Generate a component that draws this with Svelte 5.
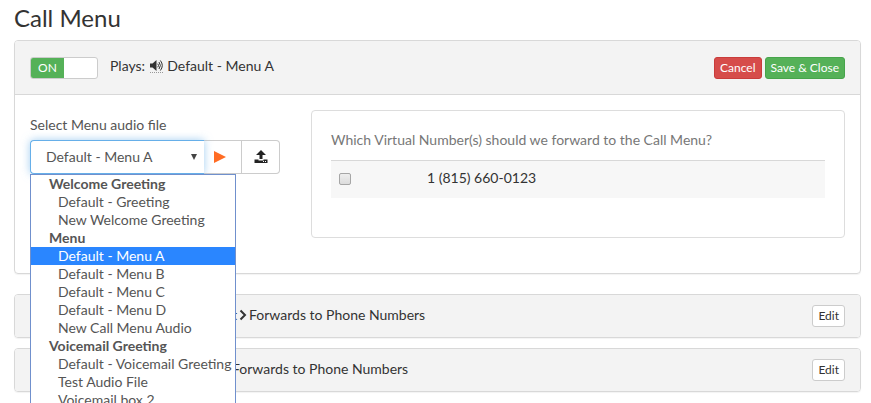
<script lang="ts">
	type Group = { label: string; options: string[] };

	const groups: Group[] = [
		{ label: 'Welcome Greeting', options: ['Default - Greeting', 'New Welcome Greeting'] },
		{
			label: 'Menu',
			options: [
				'Default - Menu A',
				'Default - Menu B',
				'Default - Menu C',
				'Default - Menu D',
				'New Call Menu Audio'
			]
		},
		{
			label: 'Voicemail Greeting',
			options: ['Default - Voicemail Greeting', 'Test Audio File', 'Voicemail box 2']
		}
	];

	let selected = $state('Default - Menu A');
	let open = $state(true);
	let enabled = $state(true);
	let forwarded = $state(false);

	function pick(option: string) {
		selected = option;
		open = false;
	}

	function toggleList(e: Event) {
		// the grouped list below replaces the native popup
		e.preventDefault();
		open = !open;
	}
</script>

<main>
	<h1>Call Menu</h1>

	<section class="panel">
		<header class="panel-heading main-heading">
			<button class="switch" class:off={!enabled} onclick={() => (enabled = !enabled)}>
				<span>{enabled ? 'ON' : 'OFF'}</span>
			</button>
			<div class="plays">
				Plays:
				<span class="speaker">
					<svg width="13" height="11" viewBox="0 0 13 11" aria-hidden="true">
						<path d="M0 3.5h2.5L6.5 0v11L2.5 7.5H0z" fill="#333" />
						<path
							d="M7.8 3.7q1.4 1.8 0 3.6M9 2q2.8 3.5 0 7M10.4.5q3.8 5 0 10"
							fill="none"
							stroke="#333"
						/>
					</svg>
				</span>
				{selected}
			</div>
			<div class="actions">
				<button class="btn danger">Cancel</button>
				<button class="btn success">Save &amp; Close</button>
			</div>
		</header>

		<div class="panel-body">
			<div class="audio">
				<label for="audio-file">Select Menu audio file</label>
				<div class="input-group">
					<select id="audio-file" bind:value={selected} onmousedown={toggleList}>
						{#each groups as group}
							<optgroup label={group.label}>
								{#each group.options as option}
									<option>{option}</option>
								{/each}
							</optgroup>
						{/each}
					</select>
					<button class="addon" aria-label="Play">
						<svg width="12" height="12" viewBox="0 0 12 12"><path d="M0 0l12 6-12 6z" fill="#ff6c24" /></svg>
					</button>
					<button class="addon last" aria-label="Upload">
						<svg width="14" height="14" viewBox="0 0 14 14" fill="#222">
							<path d="M7 0l5 5H8.5v4h-3V5H2z" />
							<path d="M0.5 9.5h4v1h5v-1h4V13h-13z" />
							<path d="M9 11h1v1H9zM11 11h1v1h-1z" fill="#fff" />
						</svg>
					</button>

					{#if open}
						<div class="list" role="listbox" aria-label="Menu audio file">
							{#each groups as group}
								<div class="group" role="group" aria-label={group.label}>
									<strong>{group.label}</strong>
									{#each group.options as option}
										<button
											role="option"
											aria-selected={option === selected}
											class:active={option === selected}
											onclick={() => pick(option)}>{option}</button
										>
									{/each}
								</div>
							{/each}
						</div>
					{/if}
				</div>
			</div>

			<div class="well">
				<p>Which Virtual Number(s) should we forward to the Call Menu?</p>
				<table>
					<tbody>
						<tr>
							<td class="check"><input type="checkbox" id="number-1" bind:checked={forwarded} /></td>
							<td><label for="number-1">1 (815) 660-0123</label></td>
						</tr>
					</tbody>
				</table>
			</div>
		</div>
	</section>

	<section class="panel">
		<header class="panel-heading">
			<div class="step">
				<span class="from">Default</span>
				<svg width="8" height="12" viewBox="0 0 8 12" aria-hidden="true">
					<path d="M1.5 1.5L6 6l-4.5 4.5" fill="none" stroke="#333" stroke-width="2" />
				</svg>
				<span>Forwards to Phone Numbers</span>
			</div>
			<button class="btn plain">Edit</button>
		</header>
	</section>

	<section class="panel">
		<header class="panel-heading">
			<div class="step direct">Forwards to Phone Numbers</div>
			<button class="btn plain">Edit</button>
		</header>
	</section>
</main>

<style>
	:global(body) {
		background: #fff;
	}
	main {
		box-sizing: border-box;
		min-height: 100vh;
		padding: 4px 10px 10px 14px;
		overflow: hidden;
		font-family: Lato, 'Helvetica Neue', Helvetica, Arial, sans-serif;
		font-size: 14px;
		line-height: 20px;
		color: #333;
	}
	button,
	select {
		font: inherit;
		color: inherit;
		cursor: pointer;
	}
	h1 {
		margin: 0 0 8px;
		font-size: 24px;
		line-height: 28px;
		font-weight: 400;
	}
	.panel {
		margin-bottom: 10px;
		border: 1px solid #d8d8d8;
		border-radius: 4px;
		box-shadow: 0 1px 1px rgba(0, 0, 0, 0.05);
	}
	.panel:first-of-type {
		margin-bottom: 20px;
	}
	.panel-heading {
		display: flex;
		align-items: center;
		justify-content: space-between;
		padding: 10px 15px;
		background: #f3f3f3;
		border-radius: 3px;
	}
	.main-heading {
		padding: 15px;
		border-bottom: 1px solid #d8d8d8;
		border-radius: 3px 3px 0 0;
	}
	.switch {
		box-sizing: border-box;
		width: 68px;
		height: 22px;
		padding: 0;
		border: 1px solid #ccc;
		border-radius: 3px;
		background: #fff;
		overflow: hidden;
		display: flex;
	}
	.switch span {
		width: 33px;
		background: #55b158;
		color: #fff;
		font-size: 12px;
		line-height: 20px;
	}
	.switch.off {
		justify-content: flex-end;
	}
	.switch.off span {
		background: #999;
	}
	.plays {
		flex: 1;
		padding: 0 0 3px 12px;
	}
	.speaker {
		display: inline-flex;
		margin: 0 1px;
		padding-bottom: 1px;
		border-bottom: 1px dotted #999;
		vertical-align: baseline;
	}
	.actions {
		display: flex;
		gap: 3px;
	}
	.btn {
		height: 22px;
		padding: 0 5px;
		border: 1px solid;
		border-radius: 3px;
		font-size: 12px;
		line-height: 18px;
	}
	.danger {
		background: #d64c4a;
		border-color: #c93c3b;
		color: #fff;
	}
	.success {
		background: #55b158;
		border-color: #47a44b;
		color: #fff;
	}
	.plain {
		background: #fff;
		border-color: #ccc;
	}
	.panel-body {
		display: flex;
		align-items: flex-start;
		gap: 31px;
		padding: 15px 15px 35px;
	}
	.audio {
		flex: none;
		width: 250px;
		padding-top: 5px;
		color: #555;
	}
	.audio > label {
		display: block;
		margin-bottom: 5px;
	}
	.input-group {
		position: relative;
		display: flex;
		height: 34px;
	}
	select {
		flex: 1;
		min-width: 0;
		padding: 0 12px 0 15px;
		border: 1px solid #66afe9;
		border-right: 0;
		border-radius: 4px 0 0 4px;
		outline: 0;
		appearance: none;
		background: #fff;
		box-shadow: 0 0 8px rgba(102, 175, 233, 0.6);
		position: relative;
		z-index: 1;
	}
	/* drop-down arrow over the select */
	.input-group::after {
		content: '';
		position: absolute;
		z-index: 2;
		right: 83px;
		top: 14px;
		border: 3px solid transparent;
		border-top: 6px solid #444;
		border-bottom: 0;
		pointer-events: none;
	}
	.addon {
		box-sizing: border-box;
		display: flex;
		align-items: center;
		justify-content: center;
		width: 38px;
		padding: 0;
		border: 1px solid #ccc;
		border-left: 0;
		background: #fff;
	}
	.addon:not(.last) {
		padding-right: 5px;
	}
	.last {
		border-radius: 0 4px 4px 0;
	}
	.list {
		position: absolute;
		z-index: 3;
		top: 100%;
		left: 0;
		box-sizing: border-box;
		width: 206px;
		border: 1px solid #7090cd;
		background: #fff;
		line-height: 18px;
		color: #555;
	}
	.list strong {
		display: block;
		padding-left: 18px;
	}
	.list button {
		display: block;
		width: 100%;
		padding: 0 0 0 27px;
		border: 0;
		background: none;
		text-align: left;
		white-space: nowrap;
	}
	.list button.active {
		background: #2a86ff;
		color: #fff;
	}
	.well {
		flex: 1;
		box-sizing: border-box;
		min-height: 128px;
		padding: 19px;
		border: 1px solid #ddd;
		border-radius: 4px;
	}
	.well p {
		margin: 0 0 10px;
		color: #777;
	}
	table {
		width: 100%;
		border-collapse: collapse;
		background: #f7f7f7;
	}
	td {
		padding: 7px 8px 10px;
		border-top: 1px solid #d8d8d8;
	}
	td.check {
		width: 72px;
	}
	input {
		display: block;
		box-sizing: border-box;
		width: 12px;
		height: 12px;
		margin: 2px 0 0;
		appearance: none;
		border: 1px solid #a6a6a6;
		border-radius: 2px;
		background: linear-gradient(#eee, #dcdcdc);
	}
	input:checked {
		background: #2a86ff;
	}
	.step {
		display: flex;
		align-items: center;
		gap: 2px;
		padding-bottom: 2px;
	}
	.from {
		width: 207px;
		text-align: right;
	}
	.direct {
		padding-left: 202px;
	}
</style>
